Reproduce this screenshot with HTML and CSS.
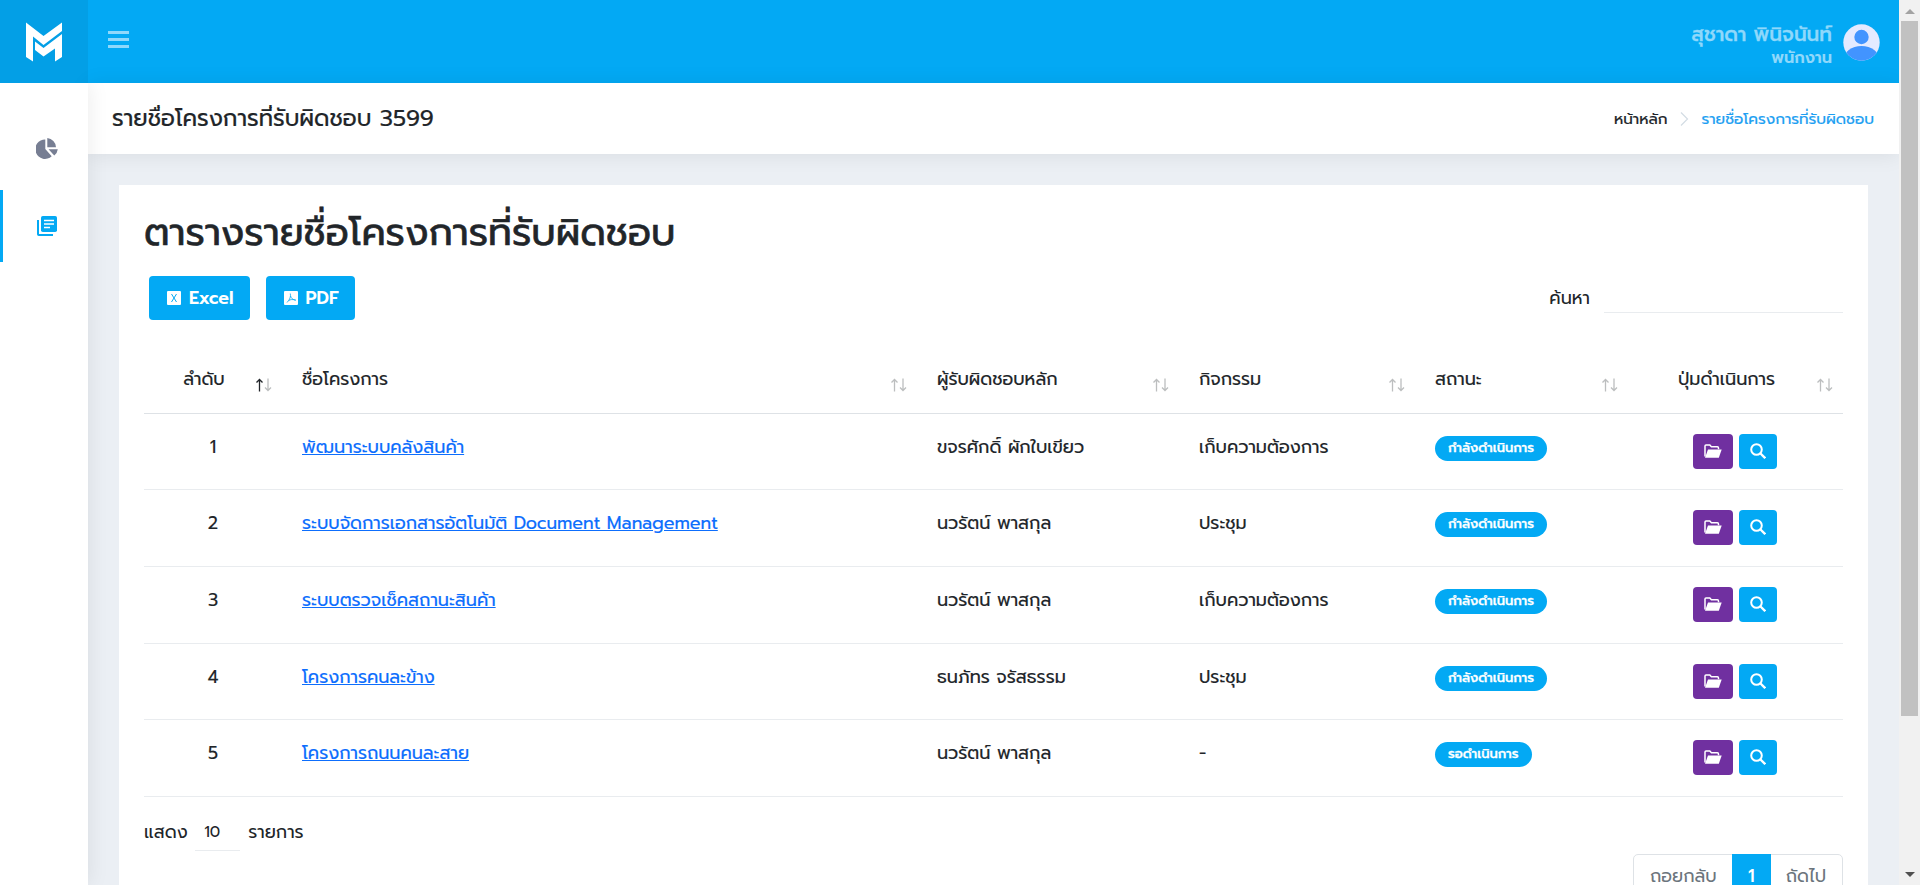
FILE: index.html
```html
<!DOCTYPE html>
<html lang="th">
<head>
<meta charset="utf-8">
<title>รายชื่อโครงการที่รับผิดชอบ</title>
<link rel="stylesheet" href="styles.css">
</head>
<body>
<svg class="defs" aria-hidden="true">
  <symbol id="folder" viewBox="0 0 18 14"><path d="M1 12.500V2Q1 1 2 1h3.800l1.600 1.800h6Q14.500 2.800 14.500 4v1.200" fill="none" stroke="#fff" stroke-width="1.500"/><path d="M4 5.500h13.700L14.800 13.800H1z" fill="#fff"/></symbol>
  <symbol id="search" viewBox="0 0 16 16"><circle cx="6.500" cy="6.500" r="5.300" fill="none" stroke="#fff" stroke-width="2"/><path d="M10.500 10.500l4.800 4.700" fill="none" stroke="#fff" stroke-width="2.400"/></symbol>
  <symbol id="sort" viewBox="0 0 16 14"><path d="M3.500 13.500V1.500M.5 4.500l3-3 3 3M12 .5v12M9 9.500l3 3 3-3"/></symbol>
</svg>
<div class="app">
  <header class="topbar">
    <div class="brand">
      <svg width="38" height="42" viewBox="0 0 38 42"><path fill="#fff" d="M1 .5L18.500 14 37 .5V9L18.500 23 8 14.500V39.500L1 35z"/><path fill="#fff" d="M37 12v23l-7 4.500V26.500L18.500 34.500 10 28v-8.500l8.500 6.500z"/></svg>
    </div>
    <button class="menu"><i></i><i></i><i></i></button>
    <div class="user">
      <div class="user-text"><div class="user-name">สุชาดา พินิจนันท์</div><div class="user-role">พนักงาน</div></div>
      <svg width="37" height="37" viewBox="0 0 37 37"><defs><clipPath id="round"><circle cx="18.500" cy="18.500" r="18.200"/></clipPath></defs><g clip-path="url(#round)"><rect width="37" height="37" fill="#e4eaff"/><circle cx="18.500" cy="13" r="7.200" fill="#4294ff"/><ellipse cx="18.500" cy="36" rx="18" ry="14" fill="#4294ff"/></g></svg>
    </div>
  </header>
  <div class="body">
    <nav class="sidebar">
      <a class="nav"><svg width="22" height="21" viewBox="0 0 22 21"><path fill="#777e93" d="M9.300 1.500V11l6.400 7.200A9.700 9.700 0 1 1 9.300 1.500zM11.300 0A9.600 9.600 0 0 1 20 9.200h-8.700zM12.500 11.300h9.300a9 9 0 0 1-3.500 6.200z"/></svg></a>
      <a class="nav active"><svg width="20" height="20" viewBox="0 0 20 20"><path fill="#03a9f4" d="M2 4H0v14.200Q0 20 1.800 20H16v-2H2z"/><rect x="4" width="16" height="16" rx="1.800" fill="#03a9f4"/><path d="M7 4.500h10M7 8h10M7 11.500h6" stroke="#fff" stroke-width="1.400"/></svg></a>
    </nav>
    <main class="main">
      <div class="titlebar">
        <h1 class="page-title">รายชื่อโครงการที่รับผิดชอบ 3599</h1>
        <div class="crumbs"><span>หน้าหลัก</span><svg width="9" height="14" viewBox="0 0 9 14"><path d="M1 .5L7.500 7 1 13.500" fill="none" stroke="#d3dce4" stroke-width="1.200"/></svg><a>รายชื่อโครงการที่รับผิดชอบ</a></div>
      </div>
      <section class="card">
        <h2 class="heading">ตารางรายชื่อโครงการที่รับผิดชอบ</h2>
        <div class="tools">
          <button class="export"><svg width="14" height="15" viewBox="0 0 14 15"><rect width="14" height="14" rx="1" fill="#fff"/><path d="M4.500 3l5 8M9.500 3l-5 8" stroke="#03a9f4"/></svg>Excel</button>
          <button class="export"><svg width="14" height="15" viewBox="0 0 14 15"><rect width="14" height="14" rx="1" fill="#fff"/><path d="M6.300 2.500C7 5.500 6 8.500 3 11.500M6.500 5C7.500 7.500 9 9 12 9.200M4.500 9.500c2-1 4-1.300 7-.5" fill="none" stroke="#03a9f4" stroke-width=".8"/></svg>PDF</button>
          <label class="search">ค้นหา<span class="search-input"></span></label>
        </div>
        <div class="table">
          <div class="row head">
            <div class="cell no">ลำดับ<svg class="sort" viewBox="0 0 16 14"><path class="asc" d="M3.500 13.500V1.500M.5 4.500l3-3 3 3"/><path d="M12 .5v12M9 9.500l3 3 3-3"/></svg></div>
            <div class="cell name">ชื่อโครงการ<svg class="sort"><use href="#sort"/></svg></div>
            <div class="cell owner">ผู้รับผิดชอบหลัก<svg class="sort"><use href="#sort"/></svg></div>
            <div class="cell task">กิจกรรม<svg class="sort"><use href="#sort"/></svg></div>
            <div class="cell status">สถานะ<svg class="sort"><use href="#sort"/></svg></div>
            <div class="cell action">ปุ่มดำเนินการ<svg class="sort"><use href="#sort"/></svg></div>
          </div>
          <div class="row"><div class="cell no">1</div><div class="cell name"><a>พัฒนาระบบคลังสินค้า</a></div><div class="cell owner">ขจรศักดิ์ ผักใบเขียว</div><div class="cell task">เก็บความต้องการ</div><div class="cell status"><span class="badge">กำลังดำเนินการ</span></div><div class="cell action"><button class="btn open"><svg><use href="#folder"/></svg></button><button class="btn view"><svg><use href="#search"/></svg></button></div></div>
          <div class="row"><div class="cell no">2</div><div class="cell name"><a>ระบบจัดการเอกสารอัตโนมัติ Document Management</a></div><div class="cell owner">นวรัตน์ พาสกุล</div><div class="cell task">ประชุม</div><div class="cell status"><span class="badge">กำลังดำเนินการ</span></div><div class="cell action"><button class="btn open"><svg><use href="#folder"/></svg></button><button class="btn view"><svg><use href="#search"/></svg></button></div></div>
          <div class="row"><div class="cell no">3</div><div class="cell name"><a>ระบบตรวจเช็คสถานะสินค้า</a></div><div class="cell owner">นวรัตน์ พาสกุล</div><div class="cell task">เก็บความต้องการ</div><div class="cell status"><span class="badge">กำลังดำเนินการ</span></div><div class="cell action"><button class="btn open"><svg><use href="#folder"/></svg></button><button class="btn view"><svg><use href="#search"/></svg></button></div></div>
          <div class="row"><div class="cell no">4</div><div class="cell name"><a>โครงการคนละข้าง</a></div><div class="cell owner">ธนภัทร จรัสธรรม</div><div class="cell task">ประชุม</div><div class="cell status"><span class="badge">กำลังดำเนินการ</span></div><div class="cell action"><button class="btn open"><svg><use href="#folder"/></svg></button><button class="btn view"><svg><use href="#search"/></svg></button></div></div>
          <div class="row"><div class="cell no">5</div><div class="cell name"><a>โครงการถนนคนละสาย</a></div><div class="cell owner">นวรัตน์ พาสกุล</div><div class="cell task">-</div><div class="cell status"><span class="badge">รอดำเนินการ</span></div><div class="cell action"><button class="btn open"><svg><use href="#folder"/></svg></button><button class="btn view"><svg><use href="#search"/></svg></button></div></div>
        </div>
        <div class="length">แสดง<span class="select">10</span>รายการ</div>
        <div class="pager"><span class="page">ถอยกลับ</span><span class="page current">1</span><span class="page">ถัดไป</span></div>
      </section>
    </main>
  </div>
</div>
<div class="scrollbar"><span class="arrow-up"></span><span class="thumb"></span><span class="arrow-down"></span></div>
</body>
</html>
```

FILE: styles.css
```css
* { box-sizing: border-box; }
body {
  margin: 0;
  height: 885px;
  overflow: hidden;
  display: flex;
  font: 400 17.7px/26px Prompt, "Noto Sans Thai", "Noto Sans", sans-serif;
  color: #212529;
  background: #ebeff4;
}
button { border: 0; font: inherit; padding: 0; }
svg { display: block; flex: none; }
.defs { position: absolute; width: 0; height: 0; }
.app { width: 1899px; height: 885px; display: flex; flex-direction: column; overflow: hidden; }

.topbar { height: 83px; flex: none; display: flex; background: #03a9f4; color: #8fd8fb; }
.brand { width: 88px; background: #039fe6; padding: 22px 0 0 25px; }
.menu { width: 21px; margin: 31px 0 0 20px; background: none; display: flex; flex-direction: column; gap: 4px; align-self: flex-start; }
.menu i { height: 3px; background: #8fd8fb; }
.user { margin-left: auto; padding: 24px 19px 0 0; display: flex; gap: 11px; }
.user-text { text-align: right; margin-top: -2px; }
.user-name { font-size: 20px; line-height: 24px; font-weight: 500; -webkit-text-stroke: .3px; }
.user-role { font-size: 16.1px; line-height: 24px; font-weight: 600; }

.body { flex: 1; min-height: 0; display: flex; }
.sidebar { width: 88px; flex: none; background: #fff; padding-top: 31px; display: flex; flex-direction: column; gap: 4px; box-shadow: 1px 0 20px rgba(0, 0, 0, .08); z-index: 1; clip-path: inset(0 -40px -40px 0); }
.nav { height: 72px; padding: 24px 0 0 36px; }
.nav.active { border-left: 3px solid #03a9f4; padding: 26px 0 0 34px; }
.main { flex: 1; min-width: 0; }

.titlebar { height: 71px; background: #fff; display: flex; align-items: center; padding: 0 25px 0 24px; box-shadow: 0 1px 20px rgba(0, 0, 0, .08); }
.page-title { margin: 0; font-size: 22.84px; font-weight: 400; line-height: 32px; -webkit-text-stroke: .2px; }
.crumbs { margin-left: auto; display: flex; align-items: center; font-size: 15.2px; gap: 12px; -webkit-text-stroke: .2px; }
.crumbs svg { margin-left: 1px; }
.crumbs a { color: #1e9ff2; }

.card { margin: 31px 31px 0; height: 780px; background: #fff; padding: 25px; }
.heading { margin: 0; font-size: 37.95px; font-weight: 400; line-height: 46px; -webkit-text-stroke: .6px; }
.tools { display: flex; margin-top: 20px; padding-left: 5px; }
.export { height: 44px; padding: 0 16px 0 18px; margin-right: 16px; border-radius: 4px; background: #03a9f4; color: #fff; font-weight: 600; display: flex; align-items: center; gap: 8px; }
.search { margin-left: auto; display: flex; gap: 14px; padding-top: 9px; }
.search-input { width: 239px; height: 28px; border-bottom: 1px solid #e9ecef; }

.table { margin-top: 25px; -webkit-text-stroke: .15px; }
.row { height: 76.7px; display: flex; border-bottom: 1px solid #e9ecef; }
.cell { position: relative; padding: 20px 12px 0 20px; }
.no { width: 138px; text-align: center; padding-left: 12px; }
.name { width: 635px; }
.owner { width: 262px; }
.task { width: 236px; }
.status { width: 213px; }
.action { width: 215px; display: flex; justify-content: center; gap: 6px; padding: 20px 14px 0 12px; }
.head { height: 68.7px; border-color: #dee2e6; }
.head .cell { padding-top: 21px; }
.head .no, .head .action { padding: 21px 38px 0 20px; white-space: nowrap; }
.name a { color: #0d6efd; text-decoration: underline; }
.sort { position: absolute; right: 10px; top: 33px; width: 16px; height: 14px; fill: none; stroke: #bcbebf; stroke-width: 1.3; }
.asc { stroke: #212529; }
.badge { display: inline-block; height: 25px; margin-top: 2px; padding: 0 13px; border-radius: 13px; background: #03a9f4; color: #fff; font-size: 13.05px; font-weight: 500; line-height: 24px; vertical-align: top; white-space: nowrap; -webkit-text-stroke: .3px; }
.btn { height: 35px; border-radius: 4px; display: flex; justify-content: center; align-items: flex-start; padding-top: 9px; }
.open { width: 40px; background: #7030a0; padding-top: 10px; }
.open svg { width: 18px; height: 14px; }
.view { width: 38px; background: #03a9f4; }
.view svg { width: 16px; height: 16px; }

.length { display: flex; align-items: center; height: 36px; margin-top: 17.8px; padding-bottom: 2px; }
.select { width: 45px; height: 36px; margin: 2px 8px 0 7.5px; padding-left: 9px; border-bottom: 1px solid #e9ecef; font-size: 15.5px; line-height: 35px; }
.pager { display: flex; width: 210px; margin: 3px 0 0 auto; border: 1px solid #dee2e6; border-radius: 5px; color: #6c757d; }
.page { height: 44px; line-height: 42px; padding: 0 15px 0 16px; white-space: nowrap; }
.current { width: 39px; flex: none; padding: 0; margin: -1px 0; line-height: 44px; text-align: center; background: #03a9f4; color: #fff; font-weight: 500; }
.page:last-child { padding-left: 15px; }

.scrollbar { width: 21px; background: #f1f1f1; padding: 9px 2px 8px; display: flex; flex-direction: column; align-items: center; }
.arrow-up { border: 5px solid transparent; border-top: 0; border-bottom-color: #a3a3a3; }
.thumb { width: 17px; height: 695px; margin-top: 7px; background: #c1c1c1; }
.arrow-down { margin-top: auto; border: 5px solid transparent; border-bottom: 0; border-top-color: #505050; }
```
